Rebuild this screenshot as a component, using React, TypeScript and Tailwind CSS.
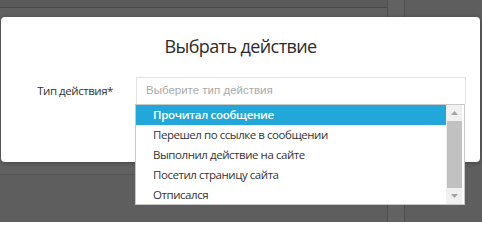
const options = [
  "Прочитал сообщение",
  "Перешел по ссылке в сообщении",
  "Выполнил действие на сайте",
  "Посетил страницу сайта",
  "Отписался",
];

function ScrollBar() {
  return (
    <div className="flex w-[16px] flex-col bg-[#f0f0f0]">
      <div className="flex h-[16px] items-center justify-center">
        <svg width="7" height="4" viewBox="0 0 7 4">
          <path d="M0 4 L3.5 0 L7 4 Z" fill="#a3a3a3" />
        </svg>
      </div>
      <div className="mx-auto h-[67px] w-[15px] bg-[#c1c1c1]" />
      <div className="flex-1" />
      <div className="flex h-[16px] items-center justify-center">
        <svg width="7" height="4" viewBox="0 0 7 4">
          <path d="M0 0 L3.5 4 L7 0 Z" fill="#a3a3a3" />
        </svg>
      </div>
    </div>
  );
}

export default function App() {
  return (
    <div
      className="relative h-[222px] w-[482px] overflow-hidden bg-[#5f5f5f]"
      style={{ fontFamily: '"Open Sans", "Noto Sans", sans-serif' }}
    >
      {/* page behind the overlay */}
      <div className="flex h-full">
        <div className="flex w-[388px] flex-col border-r border-[#4f4f4f]">
          <div className="h-[8px] border-b border-[#4b4b4b] bg-[#5a5a5a]" />
          <div className="h-[166px] bg-[#616161]" />
          <div className="flex-1 border-t border-[#555555] bg-[#5e5e5e]" />
        </div>
        <div className="w-[17px] border-r border-[#4f4f4f] bg-[#626262]" />
        <div className="flex-1 bg-[#5e5e5e]" />
      </div>

      {/* modal */}
      <div className="absolute left-[1px] top-[17px] h-[145px] w-[479px] rounded-[4px] bg-white shadow-[0_1px_4px_rgba(0,0,0,0.3)]">
        <div className="pt-[17px] text-center text-[18px] font-medium leading-[24px] tracking-[-0.6px] text-[#2b2b2b]">
          Выбрать действие
        </div>
        <div className="mt-[19px] flex items-center">
          <div className="w-[113px] pr-[1px] text-right text-[11.5px] tracking-[-0.45px] text-[#333333]">Тип действия*</div>
          <div
            className="ml-[22px] flex h-[27px] w-[330px] items-center border-x border-t border-[#e3e3e3] pl-[9px] text-[11.5px] text-[#a9a9a9]"
            style={{ fontFamily: '"Liberation Sans", Arial, sans-serif' }}
          >
            Выберите тип действия
          </div>
        </div>
      </div>

      {/* open list */}
      <div className="absolute left-[135px] top-[104px] flex h-[101px] w-[330px] border border-[#c8c8c8] bg-white">
        <div className="flex-1">
          {options.map((o, i) => (
            <div
              key={o}
              className={
                i === 0
                  ? "flex h-[20px] items-center bg-[#22a7da] pl-[17px] text-[11.5px] font-semibold tracking-[-0.3px] text-white"
                  : "flex h-[20px] items-center pl-[17px] text-[11.5px] tracking-[-0.45px] text-[#333333]"
              }
            >
              {o}
            </div>
          ))}
        </div>
        <ScrollBar />
        <div className="w-[2px]" />
      </div>
    </div>
  );
}
